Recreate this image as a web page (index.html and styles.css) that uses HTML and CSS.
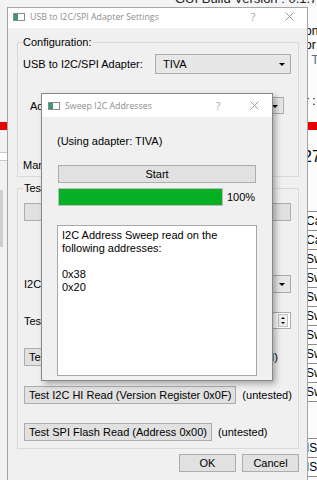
FILE: index.html
```html
<!DOCTYPE html>
<html lang="en">
<head>
    <meta charset="UTF-8">
    <meta name="viewport" content="width=device-width, initial-scale=1.0">
    <title>USB to I2C/SPI Adapter Settings</title>
    <link rel="stylesheet" href="styles.css">
</head>
<body>
    <!-- main window, mostly hidden behind the dialogs -->
    <div class="app">
        <div class="app-head"><span>GUI Build Version : 0.1.7</span></div>
        <div class="app-body">
            <div class="strip strip-left">
                <div class="red-bar"></div>
                <div class="cell"></div>
                <div class="scroll-patch"></div>
            </div>
            <div class="strip strip-right">
                <div class="frag first">on</div>
                <div class="frag">or</div>
                <div class="frag dim">: T</div>
                <div class="frag gap">r :</div>
                <div class="red-bar"></div>
                <div class="frag big">27</div>
                <div class="side-list">
                    <div>Ca</div>
                    <div>Ca</div>
                    <div>Sw</div>
                    <div>Sw</div>
                    <div>Sw</div>
                    <div>Sw</div>
                    <div>Sw</div>
                    <div>Sw</div>
                    <div>Sw</div>
                    <div>Sw</div>
                </div>
                <div class="frag colon">:</div>
                <div class="side-list tail">
                    <div>IS</div>
                    <div>IS</div>
                </div>
            </div>
        </div>
    </div>

    <div class="window settings">
        <div class="titlebar">
            <svg class="win-icon" width="12" height="8" viewBox="0 0 12 8">
                <rect x="0.5" y="0.5" width="11" height="7" fill="#fff" stroke="#8c8c8c"/>
                <rect x="1" y="1" width="4" height="6" fill="#3d8c8c"/>
                <rect x="2" y="2" width="2" height="3" fill="#2fae5a"/>
            </svg>
            <span class="title-text">USB to I2C/SPI Adapter Settings</span>
            <span class="title-btn help">?</span>
            <span class="title-btn">
                <svg width="9" height="9" viewBox="0 0 9 9"><path d="M0.5 0.5L8.5 8.5M8.5 0.5L0.5 8.5" stroke="#9a9a9a" stroke-width="1"/></svg>
            </span>
        </div>
        <div class="win-body">
            <div class="group config">
                <div class="group-title">Configuration:</div>
                <div class="row adapter-row">
                    <span>USB to I2C/SPI Adapter:</span>
                    <div class="combo adapter-combo">TIVA<i class="arrow"></i></div>
                </div>
                <div class="row mode-row">
                    <span>Addr:</span>
                    <div class="combo mode-combo">7-bit<i class="arrow"></i></div>
                </div>
                <div class="row maker-row"><span>Manufacturer ID:</span></div>
            </div>
            <div class="group tests">
                <div class="group-title">Test Functions:</div>
                <button class="btn full">Detect Adapter</button>
                <div class="row speed-row">
                    <span>I2C:</span>
                    <div class="combo speed-combo">100 kHz<i class="arrow"></i></div>
                </div>
                <div class="row addr-row">
                    <span>Test:</span>
                    <div class="spin">
                        <span>0x38</span>
                        <span class="spin-btns"><i class="up"></i><i class="down"></i></span>
                    </div>
                </div>
                <div class="row test-row lo-test">
                    <button class="btn">Test I2C Read (Version Register 0x0F)</button>
                    <span>(untested)</span>
                </div>
                <div class="row test-row hi-test">
                    <button class="btn">Test I2C HI Read (Version Register 0x0F)</button>
                    <span>(untested)</span>
                </div>
                <div class="row test-row spi-test">
                    <button class="btn">Test SPI Flash Read (Address 0x00)</button>
                    <span>(untested)</span>
                </div>
            </div>
            <div class="dialog-buttons">
                <button class="btn">OK</button>
                <button class="btn">Cancel</button>
            </div>
        </div>
    </div>

    <div class="window sweep">
        <div class="titlebar">
            <svg class="win-icon" width="12" height="8" viewBox="0 0 12 8">
                <rect x="0.5" y="0.5" width="11" height="7" fill="#fff" stroke="#8c8c8c"/>
                <rect x="1" y="1" width="4" height="6" fill="#3d8c8c"/>
                <rect x="2" y="2" width="2" height="3" fill="#2fae5a"/>
            </svg>
            <span class="title-text">Sweep I2C Addresses</span>
            <span class="title-btn help">?</span>
            <span class="title-btn">
                <svg width="9" height="9" viewBox="0 0 9 9"><path d="M0.5 0.5L8.5 8.5M8.5 0.5L0.5 8.5" stroke="#9a9a9a" stroke-width="1"/></svg>
            </span>
        </div>
        <div class="win-body">
            <div class="using">(Using adapter: TIVA)</div>
            <button class="btn start">Start</button>
            <div class="progress-row">
                <div class="progress"><div class="progress-fill" style="width: 100%"></div></div>
                <span>100%</span>
            </div>
            <div class="output">I2C Address Sweep read on the
following addresses:

0x38
0x20</div>
        </div>
    </div>
</body>
</html>
```

FILE: styles.css
```css
* {
    box-sizing: border-box;
}
html, body {
    margin: 0;
    padding: 0;
}
body {
    position: relative;
    width: 317px;
    height: 480px;
    overflow: hidden;
    font-family: "Liberation Sans", Arial, sans-serif;
    font-size: 11px;
    line-height: 14px;
    color: #000;
    background: #f4f4f4;
}

/* background app */
.app {
    height: 480px;
    display: flex;
    flex-direction: column;
}
.app-head {
    flex: none;
    height: 7px;
    overflow: hidden;
    padding-left: 175px;
    white-space: nowrap;
    font-size: 13px;
    line-height: 15px;
    color: #222;
}
.app-head span {
    display: block;
    margin-top: -9px;
}
.app-body {
    flex: 1;
    display: flex;
    justify-content: space-between;
}
.strip {
    display: flex;
    flex-direction: column;
    overflow: hidden;
    white-space: nowrap;
}
.strip-left {
    width: 7px;
    background: #f2f2f2;
}
.strip-right {
    width: 12px;
    background: #fbfbfb;
    font-size: 12px;
}
.red-bar {
    flex: none;
    height: 8px;
    background: #e60000;
}
.strip-left .red-bar {
    margin-top: 115px;
}
.cell {
    height: 9px;
    margin-top: 22px;
    border-top: 1px solid #c8c8c8;
    border-bottom: 1px solid #c8c8c8;
    background: #fff;
}
.scroll-patch {
    width: 3px;
    height: 57px;
    margin-top: 29px;
    background: #cfcfcf;
}
.frag {
    line-height: 14px;
}
.frag.first {
    margin-top: 17px;
}
.frag.dim {
    margin-top: 1px;
    color: #5a6a80;
}
.frag.gap {
    margin-top: 27px;
}
.strip-right .red-bar {
    margin-top: 14px;
}
.frag.big {
    margin-top: 18px;
    margin-left: -2px;
    font-size: 16px;
    line-height: 18px;
}
.side-list {
    margin-top: 45px;
    border-top: 1px solid #8a8a8a;
}
.side-list div {
    height: 19px;
    line-height: 18px;
    padding-left: 1px;
    border-bottom: 1px solid #8a8a8a;
    background: #fff;
}
.frag.colon {
    margin-top: 0;
    line-height: 16px;
}
.side-list.tail {
    margin-top: 20px;
}

/* dialog windows */
.window {
    position: absolute;
    display: flex;
    flex-direction: column;
    background: #f0f0f0;
    border: 1px solid #a5a5a5;
}
.settings {
    left: 7px;
    top: 7px;
    width: 301px;
    height: 490px;
}
.sweep {
    left: 41px;
    top: 93px;
    width: 232px;
    height: 288px;
    border-color: #888;
    box-shadow: 3px 3px 6px rgba(0, 0, 0, 0.3);
}
.titlebar {
    flex: none;
    display: flex;
    align-items: center;
    height: 20px;
    padding: 0 0 3px 5px;
    background: #fff;
    color: #8e8e8e;
    font-family: "Open Sans", "Noto Sans", sans-serif;
    font-size: 8.8px;
}
.sweep .titlebar {
    height: 23px;
    padding: 0 0 0 6px;
}
.win-icon {
    flex: none;
    margin-right: 5px;
}
.title-text {
    flex: 1;
    white-space: nowrap;
}
.title-btn {
    flex: none;
    width: 36px;
    display: flex;
    justify-content: center;
}
.help {
    font-size: 11px;
    color: #a5a5a5;
}
.win-body {
    flex: 1;
    display: flex;
    flex-direction: column;
}
.settings .win-body {
    padding: 14px 8px 0 9px;
}

/* group boxes */
.group {
    border: 1px solid #d9d9d9;
    padding: 0 7px 0 5px;
}
.group-title {
    width: max-content;
    margin-top: -8px;
    padding-right: 1px;
    background: #f0f0f0;
}
.config {
    padding-bottom: 4px;
}
.tests {
    margin-top: 11px;
    padding: 0 7px 7px 6px;
}
.row {
    display: flex;
    align-items: center;
}
.adapter-row {
    margin-top: 5px;
}
.mode-row {
    margin-top: 23px;
    padding: 0 7px;
}
.maker-row {
    margin-top: 44px;
}

/* controls */
.btn {
    height: 18px;
    margin: 0;
    padding: 0 4px;
    font-family: inherit;
    font-size: 11px;
    line-height: 14px;
    color: #000;
    background: #e1e1e1;
    border: 1px solid #adadad;
    border-radius: 0;
    white-space: nowrap;
}
.btn.full {
    display: block;
    width: 100%;
    margin-top: 8px;
}
.combo {
    position: relative;
    margin-left: auto;
    height: 20px;
    padding-left: 7px;
    line-height: 18px;
    background: #e7e7e7;
    border: 1px solid #acacac;
}
.adapter-combo {
    width: 136px;
}
.mode-combo {
    width: 120px;
    height: 17px;
    line-height: 15px;
}
.speed-combo {
    width: 80px;
    height: 18px;
    line-height: 16px;
}
.arrow {
    position: absolute;
    right: 5px;
    top: 50%;
    margin-top: -1px;
    border-left: 3px solid transparent;
    border-right: 3px solid transparent;
    border-top: 3px solid #000;
}
.speed-row {
    margin-top: 54px;
}
.addr-row {
    margin-top: 19px;
}
.spin {
    display: flex;
    align-items: center;
    margin-left: auto;
    width: 80px;
    height: 17px;
    padding-left: 4px;
    background: #fff;
    border: 1px solid #adadad;
}
.spin span:first-child {
    flex: 1;
}
.spin-btns {
    display: flex;
    flex-direction: column;
    justify-content: space-around;
    align-items: center;
    width: 10px;
    height: 13px;
    margin-right: 2px;
    background: #f0f0f0;
    border: 1px solid #c4c4c4;
}
.spin-btns .up {
    border-left: 2px solid transparent;
    border-right: 2px solid transparent;
    border-bottom: 2px solid #000;
}
.spin-btns .down {
    border-left: 2px solid transparent;
    border-right: 2px solid transparent;
    border-top: 2px solid #000;
}
.test-row {
    gap: 6px;
}
.lo-test {
    margin-top: 19px;
}
.hi-test {
    margin-top: 20px;
}
.spi-test {
    margin-top: 19px;
}
.dialog-buttons {
    display: flex;
    justify-content: flex-end;
    gap: 6px;
    margin-top: 5px;
}
.dialog-buttons .btn {
    width: 57px;
}

/* sweep dialog */
.sweep .win-body {
    padding: 0 15px;
}
.using {
    margin-top: 17px;
}
.btn.start {
    display: block;
    width: 198px;
    margin: 17px 0 0 1px;
}
.progress-row {
    display: flex;
    align-items: center;
    gap: 4px;
    margin: 5px 0 0 1px;
}
.progress {
    width: 165px;
    height: 18px;
    background: #e6e6e6;
    border: 1px solid #bcbcbc;
}
.progress-fill {
    height: 100%;
    background: #06b025;
}
.output {
    margin-top: 19px;
    height: 151px;
    padding: 3px 4px;
    line-height: 13px;
    white-space: pre-wrap;
    background: #fff;
    border: 1px solid #a8a8a8;
}
```
